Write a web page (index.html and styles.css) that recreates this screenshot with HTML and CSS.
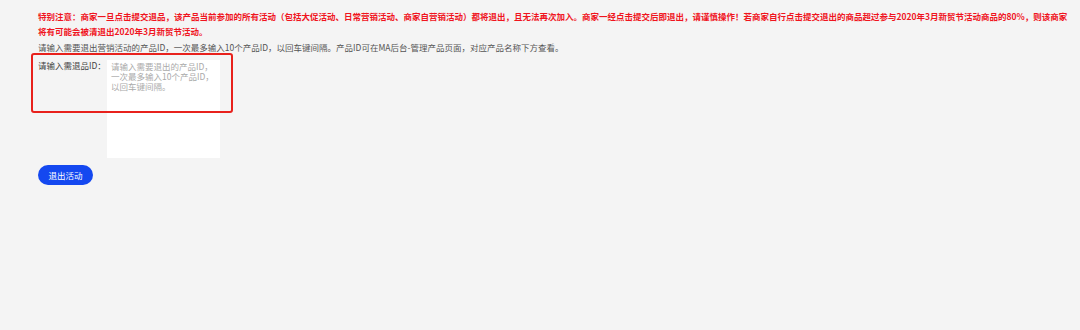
FILE: index.html
```html
<!DOCTYPE html>
<html lang="zh-CN">
<head>
<meta charset="utf-8">
<title>退出活动</title>
<link rel="stylesheet" href="styles.css">
</head>
<body>
<div class="page">
  <p class="notice">特别注意：商家一旦点击提交退品，该产品当前参加的所有活动（包括大促活动、日常营销活动、商家自营销活动）都将退出，且无法再次加入。商家一经点击提交后即退出，请谨慎操作！若商家自行点击提交退出的商品超过参与2020年3月新贸节活动商品的80%，则该商家将有可能会被清退出2020年3月新贸节活动。</p>
  <p class="hint">请输入需要退出营销活动的产品ID，一次最多输入10个产品ID，以回车键间隔。产品ID可在MA后台-管理产品页面，对应产品名称下方查看。</p>
  <div class="form-row">
    <label class="label" for="ids">请输入需退品ID：</label>
    <textarea id="ids" class="ids" placeholder="请输入需要退出的产品ID，&#10;一次最多输入10个产品ID，&#10;以回车键间隔。"></textarea>
    <div class="mark"></div>
  </div>
  <button class="submit" type="button">退出活动</button>
</div>
</body>
</html>
```

FILE: styles.css
```css
html, body {
  margin: 0;
  padding: 0;
  background: #f4f4f4;
}

.page {
  padding: 9px 9px 0 38px;
  font-family: "Noto Sans CJK SC", "Noto Sans", sans-serif;
  font-size: 8.5px;
}

.notice {
  margin: 0;
  color: #f0141e;
  font-weight: bold;
  line-height: 15px;
}

.hint {
  margin: 1px 0 0;
  color: #555;
  line-height: 15px;
}

.form-row {
  position: relative;
  display: flex;
  align-items: flex-start;
  margin-top: 5px;
}

.label {
  width: 69px;
  flex: none;
  color: #444;
  line-height: 10px;
}

.ids {
  width: 113px;
  height: 98px;
  box-sizing: border-box;
  margin: 0;
  padding: 1px 0 0 4px;
  border: none;
  outline: none;
  resize: none;
  background: #fff;
  font-family: inherit;
  font-size: 8.5px;
  line-height: 10px;
  color: #333;
}

.ids::placeholder {
  color: #aaa;
}

.mark {
  position: absolute;
  left: -7px;
  top: -7px;
  width: 202px;
  height: 60px;
  box-sizing: border-box;
  border: 2px solid #e8211c;
  border-radius: 3px;
  pointer-events: none;
}

.submit {
  display: block;
  margin-top: 7px;
  width: 55px;
  height: 20px;
  padding: 0;
  border: none;
  border-radius: 10px;
  background: #1448f0;
  color: #fff;
  font-family: inherit;
  font-size: 8.5px;
}
```
